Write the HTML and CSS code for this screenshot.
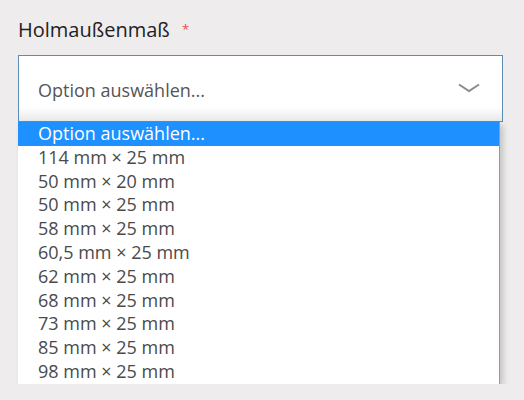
FILE: index.html
```html
<!DOCTYPE html>
<html lang="de">
<head>
<meta charset="utf-8">
<link rel="stylesheet" href="styles.css">
</head>
<body>
<div class="field">
  <div class="label">Holmaußenmaß <span class="req">*</span></div>
  <div class="select">
    <span class="select-text">Option auswählen...</span>
    <svg class="chevron" width="22" height="10" viewBox="0 0 22 10"><path d="M1 1.5 L11 8 L21 1.5" fill="none" stroke="#8a8a8a" stroke-width="2"/></svg>
  </div>
  <div class="dropdown">
    <div class="opt active">Option auswählen...</div>
    <div class="opt">114 mm × 25 mm</div>
    <div class="opt">50 mm × 20 mm</div>
    <div class="opt">50 mm × 25 mm</div>
    <div class="opt">58 mm × 25 mm</div>
    <div class="opt">60,5 mm × 25 mm</div>
    <div class="opt">62 mm × 25 mm</div>
    <div class="opt">68 mm × 25 mm</div>
    <div class="opt">73 mm × 25 mm</div>
    <div class="opt">85 mm × 25 mm</div>
    <div class="opt">98 mm × 25 mm</div>
  </div>
</div>
</body>
</html>
```
FILE: styles.css
```css
html, body {
  margin: 0;
  padding: 0;
  background: #eeecec;
  font-family: "Open Sans", "Noto Sans", sans-serif;
}
.field {
  padding: 16px 0 0 18px;
  width: 485px;
}
.label {
  font-size: 20px;
  line-height: 27px;
  color: #222;
  height: 39px;
}
.req {
  color: #e05050;
  font-size: 13px;
  margin-left: 7px;
  vertical-align: 3px;
}
.select {
  box-sizing: border-box;
  height: 67px;
  border: 1px solid #5a8eb4;
  background: linear-gradient(to bottom, #ffffff 78%, #e9e9e9 100%);
  display: flex;
  align-items: center;
  justify-content: space-between;
  padding: 0 22px 0 19px;
}
.select-text {
  font-size: 18px;
  color: #555;
  padding-top: 3px;
}
.chevron {
  display: block;
  margin-top: -2px;
}
.dropdown {
  width: 482px;
  background: #fff;
  border-right: 1px solid #9a9a9a;
  box-sizing: border-box;
  box-shadow: 3px 3px 6px rgba(0,0,0,0.18);
}
.opt {
  height: 23.8px;
  line-height: 23.8px;
  padding-left: 20px;
  font-size: 18px;
  color: #4a4a4a;
  white-space: nowrap;
}
.opt.active {
  background: #1e90ff;
  color: #fff;
}
```
